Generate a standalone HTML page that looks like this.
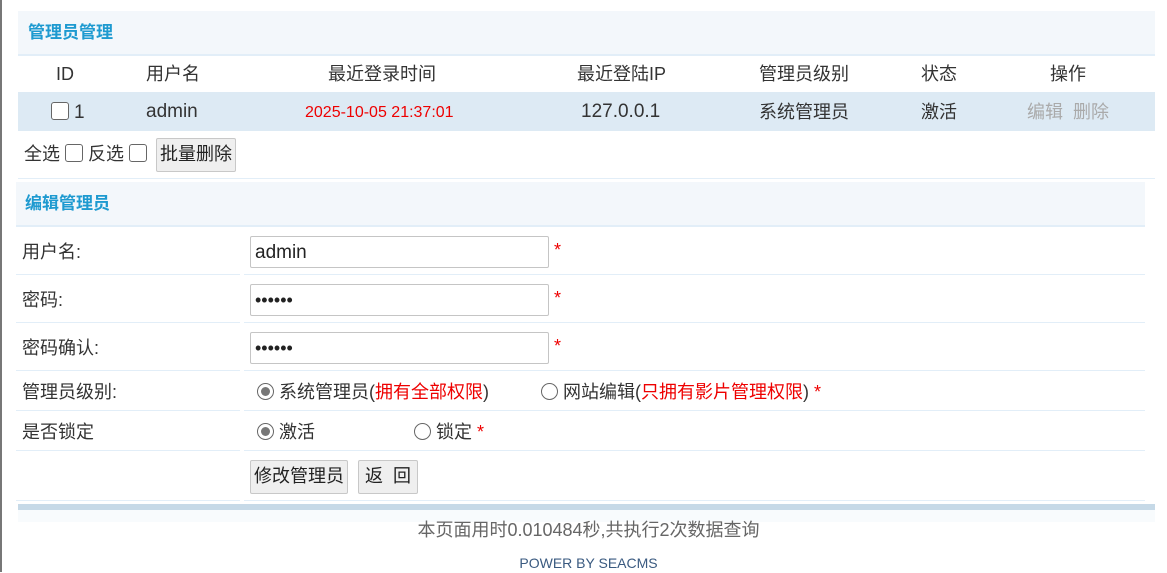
<!DOCTYPE html><html><head><meta charset="utf-8"><style>
body{margin:0;width:1167px;height:572px;overflow:hidden;background:#fff;font-family:"Liberation Sans","Noto Sans CJK SC",sans-serif;color:#333;position:relative;font-size:18px;line-height:20px}
.a{position:absolute;white-space:nowrap;line-height:20px}
.h{background:#f3f7fb;border-bottom:2px solid #e2eef8}
.t{color:#1e9ad0;font-weight:bold;font-size:17px}
.cb{display:inline-block;width:16px;height:16px;border:1.5px solid #666;border-radius:3px;vertical-align:-2px;background:#fff}
.btn{background:#efefef;border:1px solid #c8c8c8;border-radius:2px;font-size:18px;color:#222;text-align:center;line-height:31px}
.inp{border:1px solid #c5c5c5;border-radius:2px;width:293px;height:30px;line-height:30px;padding-left:4px;font-size:18px;color:#222}
.ln{height:1px;background:#e2eef8}
.rd{display:inline-block;width:15px;height:15px;border:1.5px solid #666;border-radius:50%;vertical-align:-2px;position:relative;background:#fff}
.rd.on::after{content:"";position:absolute;left:3px;top:3px;width:9px;height:9px;border-radius:50%;background:#777}
.r{color:#e00}
.l{font-size:19px}
</style></head><body>
<div class="a" style="left:0;top:0;width:2px;height:572px;background:#777"></div>
<div class="a h" style="left:18px;top:11px;width:1137px;height:43px"></div>
<div class="a t" style="left:28px;top:23px">管理员管理</div>
<div class="a" style="left:56px;top:64px">ID</div>
<div class="a" style="left:146px;top:64px">用户名</div>
<div class="a" style="left:328px;top:64px">最近登录时间</div>
<div class="a" style="left:577px;top:64px">最近登陆IP</div>
<div class="a" style="left:759px;top:64px">管理员级别</div>
<div class="a" style="left:921px;top:64px">状态</div>
<div class="a" style="left:1050px;top:64px">操作</div>
<div class="a" style="left:18px;top:92px;width:1137px;height:39px;background:#ddeaf4"></div>
<div class="a" style="left:51px;top:102px"><span class="cb"></span> <span class="l">1</span></div>
<div class="a l" style="left:146px;top:102px">admin</div>
<div class="a" style="left:305px;top:103px;color:#e00;font-size:16px">2025-10-05 21:37:01</div>
<div class="a l" style="left:581px;top:102px">127.0.0.1</div>
<div class="a" style="left:759px;top:102px">系统管理员</div>
<div class="a" style="left:921px;top:102px">激活</div>
<div class="a" style="left:1027px;top:102px;color:#aaa">编辑 &nbsp;删除</div>
<div class="a" style="left:24px;top:144px">全选 <span class="cb"></span> 反选 <span class="cb"></span></div>
<div class="a btn" style="left:156px;top:138px;width:78px;height:32px">批量删除</div>
<div class="a ln" style="left:18px;top:178px;width:1137px"></div>
<div class="a h" style="left:16px;top:182px;width:1129px;height:43px"></div>
<div class="a t" style="left:25px;top:194px">编辑管理员</div>
<div class="a" style="left:22px;top:242px">用户名:</div>
<div class="a inp" style="left:250px;top:236px"><span class="l">admin</span></div><div class="a r" style="left:554px;top:240px">*</div>
<div class="a" style="left:22px;top:290px">密码:</div>
<div class="a inp" style="left:250px;top:284px">••••••</div><div class="a r" style="left:554px;top:288px">*</div>
<div class="a" style="left:22px;top:338px">密码确认:</div>
<div class="a inp" style="left:250px;top:332px">••••••</div><div class="a r" style="left:554px;top:336px">*</div>
<div class="a" style="left:22px;top:382px">管理员级别:</div>
<div class="a" style="left:257px;top:382px"><span class="rd on"></span> 系统管理员(<span class="r">拥有全部权限</span>)</div>
<div class="a" style="left:541px;top:382px"><span class="rd"></span> 网站编辑(<span class="r">只拥有影片管理权限</span>) <span class="r">*</span></div>
<div class="a" style="left:22px;top:422px">是否锁定</div>
<div class="a" style="left:257px;top:422px"><span class="rd on"></span> 激活</div>
<div class="a" style="left:414px;top:422px"><span class="rd"></span> 锁定 <span class="r">*</span></div>
<div class="a btn" style="left:250px;top:460px;width:96px;height:32px">修改管理员</div>
<div class="a btn" style="left:358px;top:460px;width:58px;height:32px">返 &nbsp;回</div>
<div class="a ln" style="left:16px;top:274px;width:224px"></div><div class="a ln" style="left:244px;top:274px;width:901px"></div>
<div class="a ln" style="left:16px;top:322px;width:224px"></div><div class="a ln" style="left:244px;top:322px;width:901px"></div>
<div class="a ln" style="left:16px;top:370px;width:224px"></div><div class="a ln" style="left:244px;top:370px;width:901px"></div>
<div class="a ln" style="left:16px;top:410px;width:224px"></div><div class="a ln" style="left:244px;top:410px;width:901px"></div>
<div class="a ln" style="left:16px;top:450px;width:224px"></div><div class="a ln" style="left:244px;top:450px;width:901px"></div>
<div class="a ln" style="left:16px;top:500px;width:224px"></div><div class="a ln" style="left:244px;top:500px;width:901px"></div>
<div class="a" style="left:18px;top:504px;width:1137px;height:6px;background:#c6d9e7"></div>
<div class="a" style="left:18px;top:510px;width:1137px;height:12px;background:#f8fbfd"></div>
<div class="a" style="left:0;width:1167px;top:520px;text-align:center;color:#666;font-size:18px;padding-left:10px;box-sizing:border-box">本页面用时0.010484秒,共执行2次数据查询</div>
<div class="a" style="left:0;width:1167px;top:553px;text-align:center;color:#3a5a80;font-size:14px;padding-left:10px;box-sizing:border-box">POWER BY SEACMS</div>
</body></html>
